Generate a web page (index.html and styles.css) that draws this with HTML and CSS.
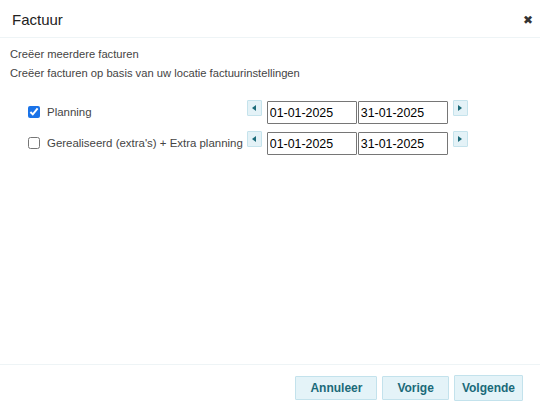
FILE: index.html
```html
<!DOCTYPE html>
<html>
<head>
<meta charset="utf-8">
<link rel="stylesheet" href="styles.css">
</head>
<body>
<div class="dialog">
  <div class="header">
    <span class="title">Factuur</span>
    <span class="close">✖</span>
  </div>
  <div class="content">
    <p class="line">Creëer meerdere facturen</p>
    <p class="line">Creëer facturen op basis van uw locatie factuurinstellingen</p>
    <div class="rows">
      <label class="check"><input type="checkbox" checked><span>Planning</span></label>
      <div class="dates">
        <span class="arrow"><svg width="4" height="6" viewBox="0 0 4 6"><path d="M4 0V6L0 3Z" fill="#1b6a79"/></svg></span>
        <input class="date" value="01-01-2025">
        <input class="date" value="31-01-2025">
        <span class="arrow next"><svg width="4" height="6" viewBox="0 0 4 6"><path d="M0 0V6L4 3Z" fill="#1b6a79"/></svg></span>
      </div>
      <label class="check"><input type="checkbox"><span>Gerealiseerd (extra's) + Extra planning</span></label>
      <div class="dates">
        <span class="arrow"><svg width="4" height="6" viewBox="0 0 4 6"><path d="M4 0V6L0 3Z" fill="#1b6a79"/></svg></span>
        <input class="date" value="01-01-2025">
        <input class="date" value="31-01-2025">
        <span class="arrow next"><svg width="4" height="6" viewBox="0 0 4 6"><path d="M0 0V6L4 3Z" fill="#1b6a79"/></svg></span>
      </div>
    </div>
  </div>
  <div class="footer">
    <button class="btn">Annuleer</button>
    <button class="btn">Vorige</button>
    <button class="btn focus">Volgende</button>
  </div>
</div>
</body>
</html>
```

FILE: styles.css
```css
html, body {
  margin: 0;
  padding: 0;
  background: #fff;
}
.dialog {
  width: 540px;
  height: 414px;
  display: flex;
  flex-direction: column;
  font-family: "Liberation Sans", Arial, sans-serif;
  color: #333;
}
.header {
  height: 38px;
  box-sizing: border-box;
  border-bottom: 1px solid #eef4f6;
  display: flex;
  align-items: center;
  justify-content: space-between;
  padding: 0 7px 0 12px;
}
.title {
  font-size: 15px;
  color: #222;
  margin-top: 1px;
}
.close {
  font-size: 12px;
  color: #333;
  margin-top: 2px;
}
.content {
  flex: 1;
  padding: 10px 10px 0 10px;
}
.line {
  margin: 0 0 6px 0;
  font-size: 11.2px;
  line-height: 13px;
  color: #444;
}
.rows {
  display: grid;
  grid-template-columns: auto auto;
  justify-content: start;
  row-gap: 7px;
  margin-top: 20px;
  padding-left: 17px;
}
.check {
  display: flex;
  align-items: center;
  font-size: 11.45px;
  color: #444;
  padding-right: 4px;
}
.check input {
  margin: 0 7px 0 1px;
  width: 12px;
  height: 12px;
  accent-color: #1a73e8;
}
.dates {
  display: flex;
  align-items: flex-start;
}
.arrow {
  width: 15px;
  height: 16px;
  box-sizing: border-box;
  background: #e4f2f7;
  border: 1px solid #c5e3ec;
  border-radius: 1px;
  display: flex;
  align-items: center;
  justify-content: center;
  margin-right: 5px;
}
.arrow.next {
  margin-left: 5px;
  margin-right: 0;
}
.date {
  width: 90px;
  height: 23px;
  box-sizing: border-box;
  border: 1px solid #767676;
  border-radius: 1px;
  padding: 0 2px;
  margin: 1px 0 0 0;
  font-family: "Liberation Sans", Arial, sans-serif;
  font-size: 12.4px;
  color: #000;
}
.date + .date {
  margin-left: 1px;
}
.footer {
  height: 50px;
  box-sizing: border-box;
  border-top: 1px solid #eef4f6;
  display: flex;
  justify-content: flex-end;
  align-items: flex-start;
  padding: 10px 17px 0 0;
  gap: 5px;
}
.btn {
  height: 24px;
  margin-top: 1px;
  box-sizing: border-box;
  background: #e4f3f8;
  border: 1px solid #c3e2ec;
  border-radius: 1px;
  color: #1b6a79;
  font-family: "Liberation Sans", Arial, sans-serif;
  font-weight: bold;
  font-size: 12px;
  padding: 0 14px;
}
.btn.focus {
  height: 26px;
  margin-top: 0;
  padding: 0 7px;
}
```
